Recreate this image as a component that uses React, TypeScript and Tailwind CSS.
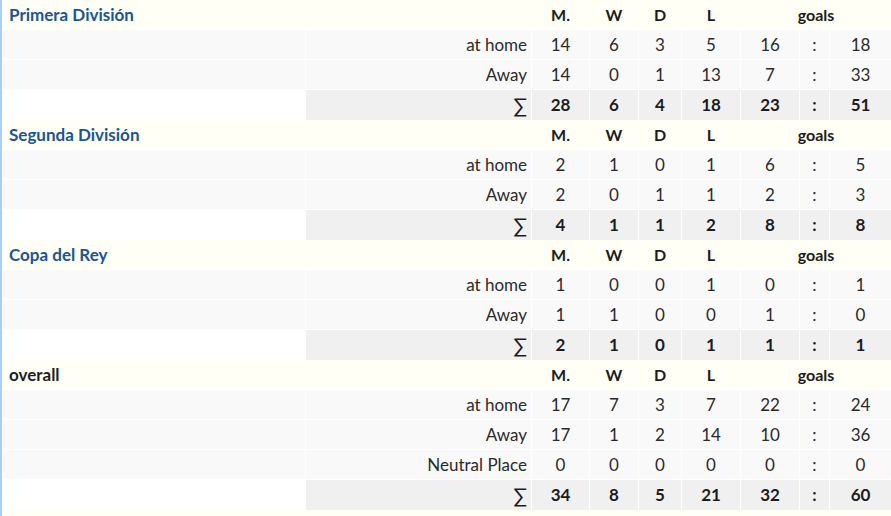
import React from "react";

type Row = { label: string; v: (string | number)[] };
type Block = { title: string; blue: boolean; rows: Row[]; sum: (string | number)[] };

const blocks: Block[] = [
  {
    title: "Primera División",
    blue: true,
    rows: [
      { label: "at home", v: [14, 6, 3, 5, 16, 18] },
      { label: "Away", v: [14, 0, 1, 13, 7, 33] },
    ],
    sum: [28, 6, 4, 18, 23, 51],
  },
  {
    title: "Segunda División",
    blue: true,
    rows: [
      { label: "at home", v: [2, 1, 0, 1, 6, 5] },
      { label: "Away", v: [2, 0, 1, 1, 2, 3] },
    ],
    sum: [4, 1, 1, 2, 8, 8],
  },
  {
    title: "Copa del Rey",
    blue: true,
    rows: [
      { label: "at home", v: [1, 0, 0, 1, 0, 1] },
      { label: "Away", v: [1, 1, 0, 0, 1, 0] },
    ],
    sum: [2, 1, 0, 1, 1, 1],
  },
  {
    title: "overall",
    blue: false,
    rows: [
      { label: "at home", v: [17, 7, 3, 7, 22, 24] },
      { label: "Away", v: [17, 1, 2, 14, 10, 36] },
      { label: "Neutral Place", v: [0, 0, 0, 0, 0, 0] },
    ],
    sum: [34, 8, 5, 21, 32, 60],
  },
];

const grid =
  "grid grid-cols-[302px_225px_57px_48px_42px_58px_58px_29px_61px] gap-x-px h-[29px]";

function Header({ title, blue }: { title: string; blue: boolean }) {
  return (
    <div className={`${grid} bg-[#fffff5] items-center font-bold text-[16px] text-[#1c1c1c]`}>
      <div
        className={`pl-[6px] text-[17px] ${blue ? "text-[#1a5596]" : "text-[#1e1e1e]"}`}
      >
        {title}
      </div>
      <div />
      <div className="text-center">M.</div>
      <div className="text-center">W</div>
      <div className="text-center">D</div>
      <div className="text-center">L</div>
      <div className="col-span-3 text-center">goals</div>
    </div>
  );
}

function DataRow({ r }: { r: Row }) {
  const [m, w, d, l, gf, ga] = r.v;
  const cell = "bg-[#f9f9f9] flex items-center justify-center";
  return (
    <div className={`${grid} text-[17px] text-[#2a2a2a]`}>
      <div className="bg-[#f9f9f9]" />
      <div className="bg-[#f9f9f9] flex items-center justify-end pr-[4px]">{r.label}</div>
      <div className={cell}>{m}</div>
      <div className={cell}>{w}</div>
      <div className={cell}>{d}</div>
      <div className={cell}>{l}</div>
      <div className={cell}>{gf}</div>
      <div className={cell}>:</div>
      <div className={cell}>{ga}</div>
    </div>
  );
}

function SumRow({ v }: { v: (string | number)[] }) {
  const [m, w, d, l, gf, ga] = v;
  const cell = "bg-[#f0f0f0] flex items-center justify-center font-bold";
  return (
    <div className={`${grid} text-[17px] text-[#1c1c1c]`}>
      <div />
      <div className="bg-[#f0f0f0] flex items-center justify-end pr-[4px] text-[20px]">∑</div>
      <div className={cell}>{m}</div>
      <div className={cell}>{w}</div>
      <div className={cell}>{d}</div>
      <div className={cell}>{l}</div>
      <div className={cell}>{gf}</div>
      <div className={cell}>:</div>
      <div className={cell}>{ga}</div>
    </div>
  );
}

export default function App() {
  return (
    <div
      className="w-[891px] h-[516px] overflow-hidden bg-white border-l-2 border-[#a8cff5] pl-px"
      style={{ fontFamily: '"Lato", "Noto Sans", sans-serif' }}
    >
      <div className="flex flex-col gap-y-px">
        {blocks.map((b) => (
          <React.Fragment key={b.title}>
            <Header title={b.title} blue={b.blue} />
            {b.rows.map((r) => (
              <DataRow key={r.label} r={r} />
            ))}
            <SumRow v={b.sum} />
          </React.Fragment>
        ))}
        <div className="h-[29px] bg-[#fffff5]" />
      </div>
    </div>
  );
}
